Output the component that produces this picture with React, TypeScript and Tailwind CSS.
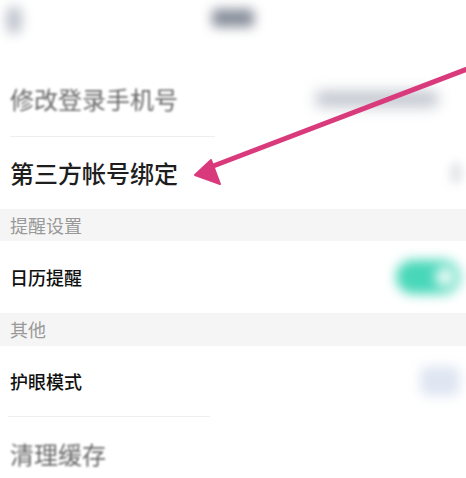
export default function App() {
  return (
    <div
      className="relative w-[466px] h-[478px] overflow-hidden bg-white"
      style={{ fontFamily: '"Noto Sans CJK SC", "Noto Sans", sans-serif' }}
    >
      {/* top bar */}
      <div className="flex items-start justify-between h-[62px] px-[6px] pt-[6px]">
        <div className="w-[16px] h-[28px] rounded-full bg-gray-400 blur-[6px] opacity-60" />
        <div className="mr-[206px] mt-[3px] w-[42px] h-[18px] rounded bg-gray-500 blur-[6px] opacity-80" />
      </div>

      {/* phone */}
      <div className="flex items-center justify-between h-[74px] pl-[10px] pr-[28px]">
        <span className="text-[24px] text-[#6a6a6a] blur-[1px]">修改登录手机号</span>
        <div className="w-[122px] h-[16px] rounded bg-gray-400 blur-[7px] opacity-60" />
      </div>
      <div className="ml-[10px] w-[205px] h-px bg-[#eeeeee]" />

      {/* third party */}
      <div className="flex items-center justify-between h-[72px] pl-[10px] pr-[4px]">
        <span className="text-[24px] font-medium text-[#1e1e1e]">第三方帐号绑定</span>
        <div className="w-[12px] h-[22px] rounded-full bg-gray-300 blur-[5px] opacity-60" />
      </div>

      <div className="flex items-center h-[32px] pl-[10px] bg-[#f5f5f5]">
        <span className="text-[18px] text-[#999]">提醒设置</span>
      </div>

      {/* calendar */}
      <div className="flex items-center justify-between h-[72px] pl-[10px] pr-[6px]">
        <span className="text-[18px] font-medium text-[#111]">日历提醒</span>
        <div className="flex items-center w-[64px] h-[34px] rounded-full bg-[#48d7b9] px-[5px] justify-end blur-[6px]">
          <div className="w-[20px] h-[20px] rounded-full bg-[#f0fbf8]" />
        </div>
      </div>

      <div className="flex items-center h-[33px] pl-[10px] bg-[#f5f5f5]">
        <span className="text-[18px] text-[#999]">其他</span>
      </div>

      {/* eye */}
      <div className="flex items-center justify-between h-[70px] pl-[10px] pr-[6px]">
        <span className="text-[18px] font-medium text-[#111]">护眼模式</span>
        <div className="w-[40px] h-[30px] rounded-lg bg-[#dfe6f2] blur-[6px]" />
      </div>
      <div className="ml-[8px] w-[202px] h-px bg-[#efefef]" />

      {/* cache */}
      <div className="flex items-center h-[74px] pl-[10px]">
        <span className="text-[24px] text-[#6a6a6a] blur-[1px]">清理缓存</span>
      </div>

      {/* arrow annotation */}
      <svg className="absolute left-0 top-0" width="466" height="478" viewBox="0 0 466 478">
        <line x1="470" y1="68" x2="208" y2="168" stroke="#d93a7c" strokeWidth="5" strokeLinecap="round" />
        <polygon points="195,175 211,160 220,184" fill="#d93a7c" stroke="#d93a7c" strokeWidth="2" strokeLinejoin="round" />
      </svg>
    </div>
  );
}
